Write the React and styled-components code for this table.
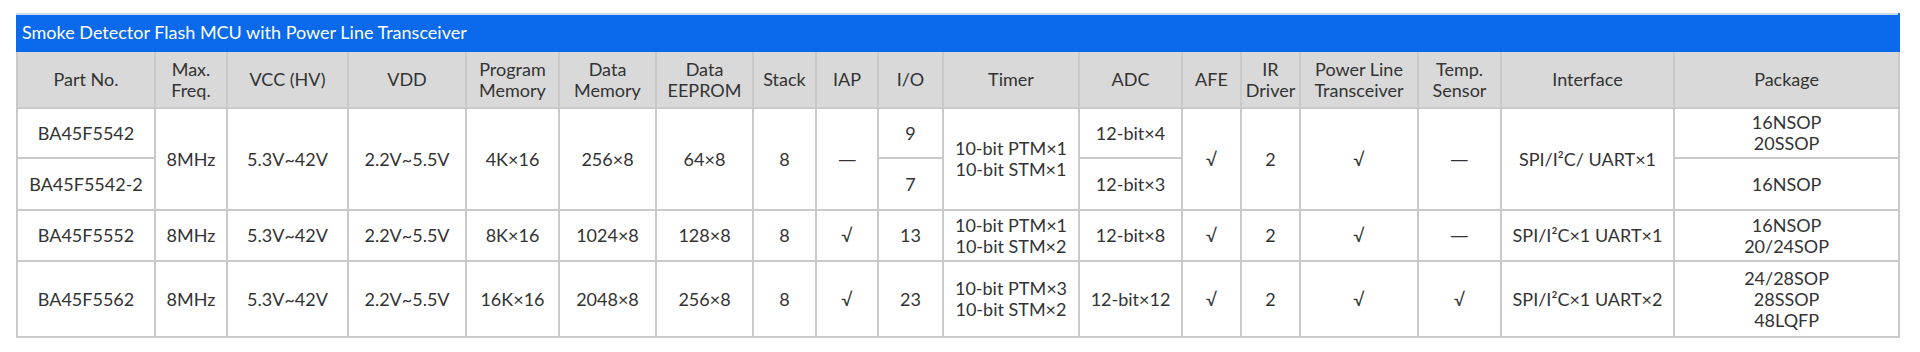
import styled, { createGlobalStyle } from 'styled-components';

const GlobalStyle = createGlobalStyle`
  body {
    margin: 0;
    background: #ffffff;
    font-family: Lato, "Open Sans", sans-serif;
  }
`;

const Page = styled.div`
  padding: 13px 20px 0 16px;
`;

const Table = styled.table`
  width: 1884px;
  table-layout: fixed;
  border-collapse: collapse;
  color: #333333;
  font-size: 18px;
  line-height: 21px;
`;

const TitleRow = styled.tr`
  height: 37px;
`;

const TitleCell = styled.th`
  padding: 0 0 0 4px;
  background: #0b6aeb;
  border: 2px solid #0b6aeb;
  border-top-color: #c9dcf7;
  color: #ffffff;
  font-weight: 400;
  font-size: 18px;
  text-align: left;
`;

const HeadCell = styled.th`
  padding: 0 2px;
  background: #d9d9d9;
  border: 2px solid #c9c9c9;
  font-weight: 400;
  text-align: center;
  vertical-align: middle;
`;

const Cell = styled.td`
  padding: 0 2px;
  border: 2px solid #cacaca;
  text-align: center;
  vertical-align: middle;
  white-space: nowrap;
`;

const Dash = styled.span`
  display: inline-block;
  transform: scaleX(1.4);
`;

const Row = styled.tr`
  height: ${(p) => p.h}px;
`;

const widths = [138, 72, 121, 118, 93, 97, 97, 63, 62, 65, 136, 103, 59, 59, 118, 83, 173, 225];

const headers = [
  'Part No.',
  ['Max.', 'Freq.'],
  'VCC (HV)',
  'VDD',
  ['Program', 'Memory'],
  ['Data', 'Memory'],
  ['Data', 'EEPROM'],
  'Stack',
  'IAP',
  'I/O',
  'Timer',
  'ADC',
  'AFE',
  ['IR', 'Driver'],
  ['Power Line', 'Transceiver'],
  ['Temp.', 'Sensor'],
  'Interface',
  'Package',
];

const Lines = ({ value }) =>
  Array.isArray(value)
    ? value.map((line, i) => (
        <span key={i}>
          {i > 0 && <br />}
          {line}
        </span>
      ))
    : value;

const App = () => {
  return (
    <Page>
      <GlobalStyle />
      <Table>
        <colgroup>
          {widths.map((w, i) => (
            <col key={i} style={{ width: w }} />
          ))}
        </colgroup>
        <thead>
          <TitleRow>
            <TitleCell colSpan={18}>Smoke Detector Flash MCU with Power Line Transceiver</TitleCell>
          </TitleRow>
          <Row h={57}>
            {headers.map((h, i) => (
              <HeadCell key={i}>
                <Lines value={h} />
              </HeadCell>
            ))}
          </Row>
        </thead>
        <tbody>
          <Row h={50}>
            <Cell>BA45F5542</Cell>
            <Cell rowSpan={2}>8MHz</Cell>
            <Cell rowSpan={2}>5.3V~42V</Cell>
            <Cell rowSpan={2}>2.2V~5.5V</Cell>
            <Cell rowSpan={2}>4K×16</Cell>
            <Cell rowSpan={2}>256×8</Cell>
            <Cell rowSpan={2}>64×8</Cell>
            <Cell rowSpan={2}>8</Cell>
            <Cell rowSpan={2}><Dash>—</Dash></Cell>
            <Cell>9</Cell>
            <Cell rowSpan={2}>
              <Lines value={['10-bit PTM×1', '10-bit STM×1']} />
            </Cell>
            <Cell>12-bit×4</Cell>
            <Cell rowSpan={2}>√</Cell>
            <Cell rowSpan={2}>2</Cell>
            <Cell rowSpan={2}>√</Cell>
            <Cell rowSpan={2}><Dash>—</Dash></Cell>
            <Cell rowSpan={2}>SPI/I²C/ UART×1</Cell>
            <Cell>
              <Lines value={['16NSOP', '20SSOP']} />
            </Cell>
          </Row>
          <Row h={52}>
            <Cell>BA45F5542-2</Cell>
            <Cell>7</Cell>
            <Cell>12-bit×3</Cell>
            <Cell>16NSOP</Cell>
          </Row>
          <Row h={51}>
            <Cell>BA45F5552</Cell>
            <Cell>8MHz</Cell>
            <Cell>5.3V~42V</Cell>
            <Cell>2.2V~5.5V</Cell>
            <Cell>8K×16</Cell>
            <Cell>1024×8</Cell>
            <Cell>128×8</Cell>
            <Cell>8</Cell>
            <Cell>√</Cell>
            <Cell>13</Cell>
            <Cell>
              <Lines value={['10-bit PTM×1', '10-bit STM×2']} />
            </Cell>
            <Cell>12-bit×8</Cell>
            <Cell>√</Cell>
            <Cell>2</Cell>
            <Cell>√</Cell>
            <Cell><Dash>—</Dash></Cell>
            <Cell>SPI/I²C×1 UART×1</Cell>
            <Cell>
              <Lines value={['16NSOP', '20/24SOP']} />
            </Cell>
          </Row>
          <Row h={76}>
            <Cell>BA45F5562</Cell>
            <Cell>8MHz</Cell>
            <Cell>5.3V~42V</Cell>
            <Cell>2.2V~5.5V</Cell>
            <Cell>16K×16</Cell>
            <Cell>2048×8</Cell>
            <Cell>256×8</Cell>
            <Cell>8</Cell>
            <Cell>√</Cell>
            <Cell>23</Cell>
            <Cell>
              <Lines value={['10-bit PTM×3', '10-bit STM×2']} />
            </Cell>
            <Cell>12-bit×12</Cell>
            <Cell>√</Cell>
            <Cell>2</Cell>
            <Cell>√</Cell>
            <Cell>√</Cell>
            <Cell>SPI/I²C×1 UART×2</Cell>
            <Cell>
              <Lines value={['24/28SOP', '28SSOP', '48LQFP']} />
            </Cell>
          </Row>
        </tbody>
      </Table>
    </Page>
  );
};

export default App;
